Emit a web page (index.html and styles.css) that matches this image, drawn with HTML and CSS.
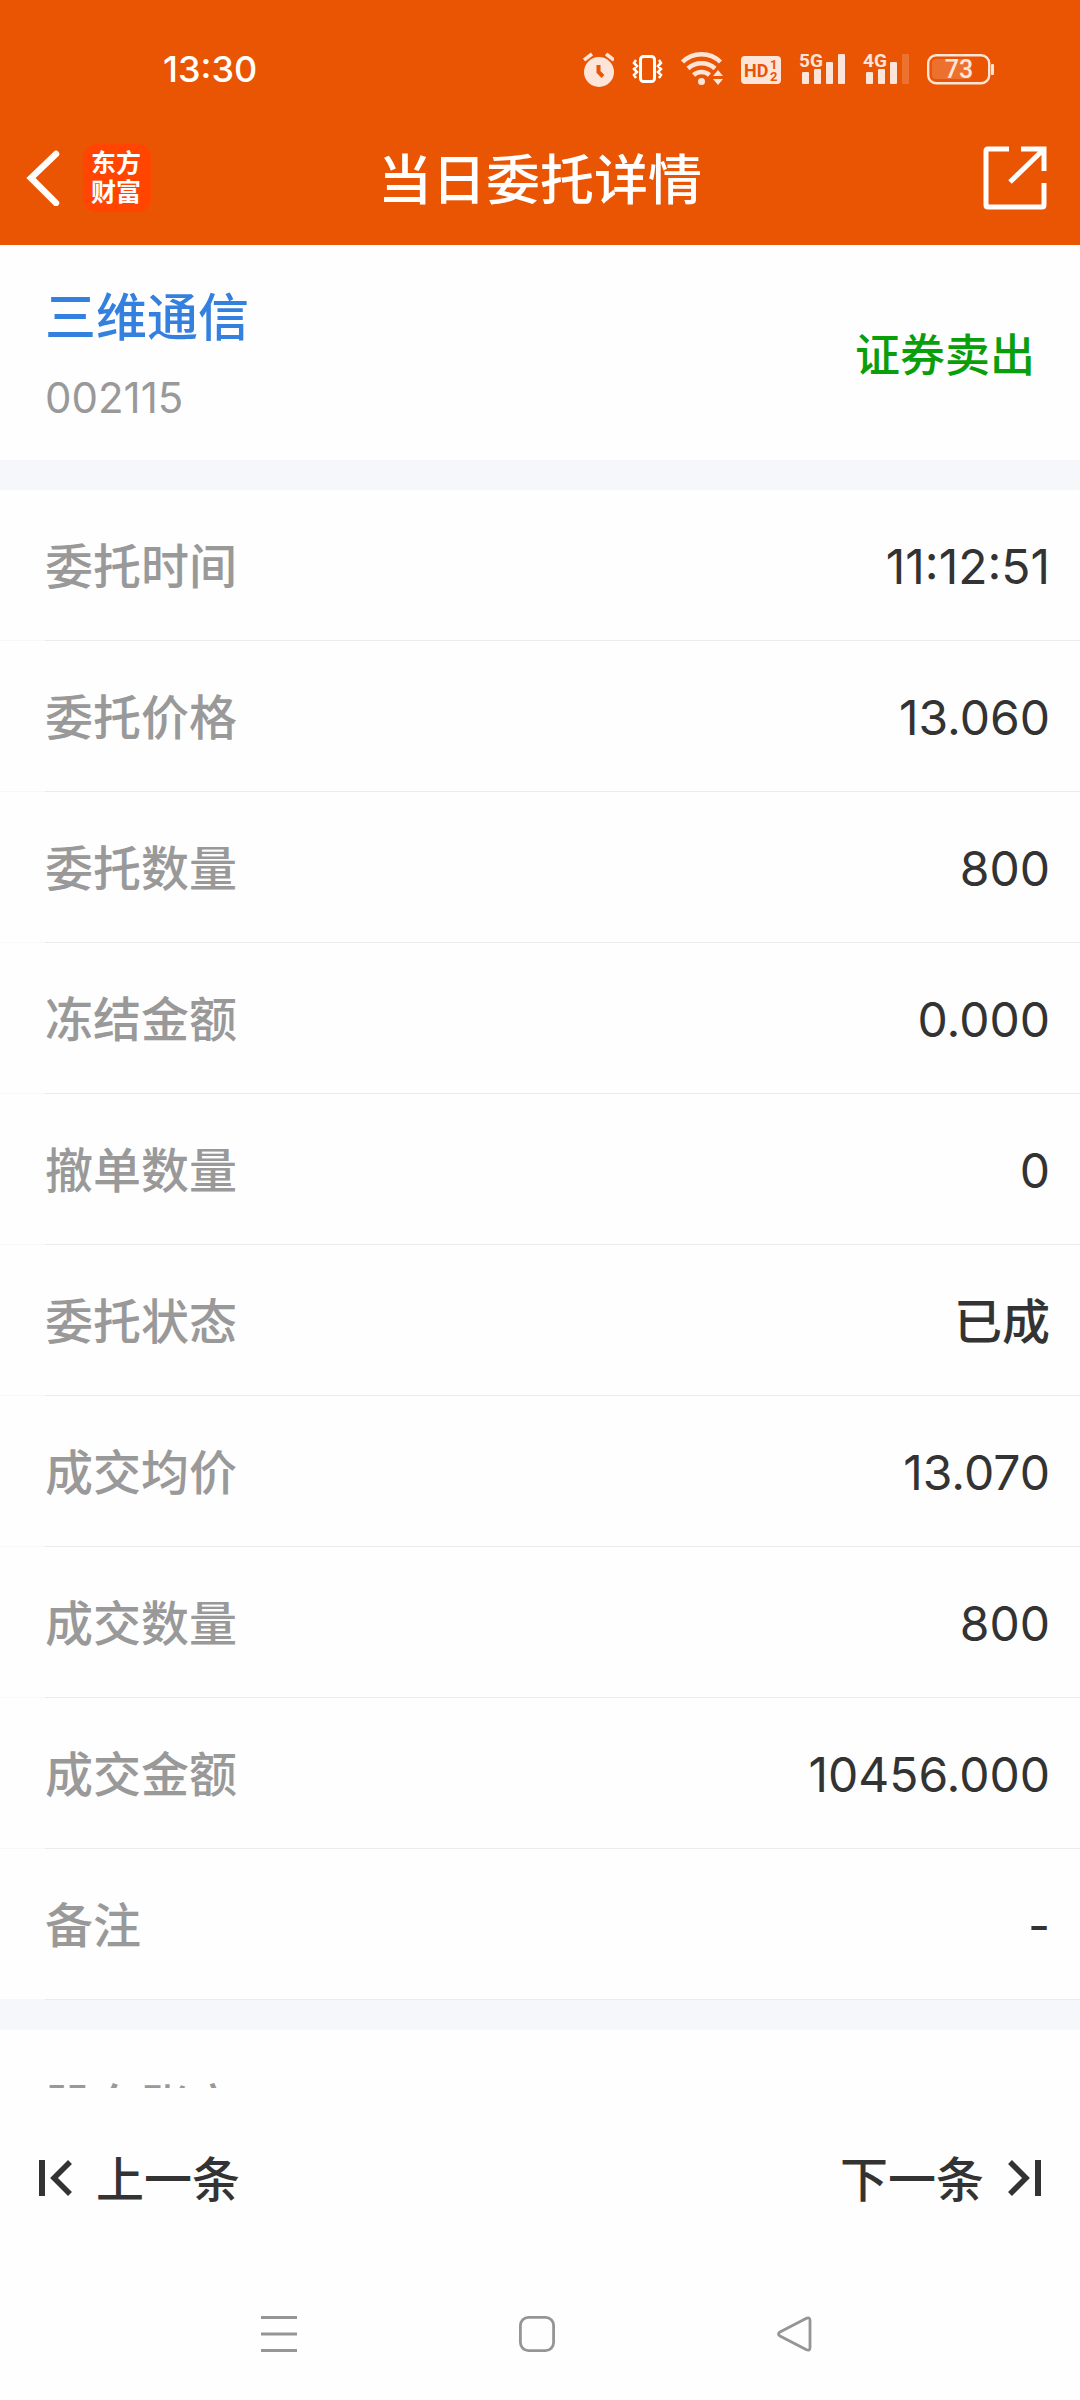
FILE: index.html
```html
<!DOCTYPE html>
<html lang="zh-CN">
<head>
  <meta charset="UTF-8">
  <meta name="viewport" content="width=device-width, initial-scale=1.0">
  <title>当日委托详情</title>
  <link rel="stylesheet" href="styles.css">
</head>
<body>
  <header class="header">
    <!-- 状态栏 -->
    <div class="status-bar">
      <span class="time">13:30</span>
      <div class="status-icons">
        <svg width="32" height="38" viewBox="0 0 32 38">
          <circle cx="17" cy="22" r="15" fill="#fde5da"/>
          <path d="M2 10L10 4M24 4l8 6" stroke="#fde5da" stroke-width="3.500" fill="none"/>
          <path d="M16.500 15v7l4.500 4.500" stroke="#ea5504" stroke-width="4" fill="none"/>
        </svg>
        <svg width="31" height="38" viewBox="0 0 31 38" fill="none" stroke="#fff">
          <rect x="8.500" y="6.500" width="14" height="25" rx="3" stroke-width="3"/>
          <path d="M4 10l-2 3 3 3-3 3 3 3-3 3 2 3M27 10l2 3-3 3 3 3-3 3 3 3-2 3" stroke-width="2.500"/>
        </svg>
        <svg width="42" height="38" viewBox="0 0 42 38">
          <g fill="none" stroke="#fde5da" stroke-width="4.500">
            <path d="M1.500 12A27 27 0 0 1 39.500 12"/>
            <path d="M7 18.500A20 20 0 0 1 34 18.500"/>
            <path d="M12.500 25A12 12 0 0 1 28.500 25"/>
          </g>
          <circle cx="20.500" cy="31.500" r="3.500" fill="#fde5da"/>
          <path d="M32 26l5-6 5 6zM32 29l5 6 5-6z" fill="#fde5da"/>
        </svg>
        <svg width="40" height="38" viewBox="0 0 40 38">
          <rect x="0" y="6" width="40" height="28" rx="4" fill="#fde5da"/>
          <g class="hd-text">
            <text x="3" y="27" font-size="18">HD</text>
            <text x="29" y="19" font-size="13">1</text>
            <text x="29" y="31" font-size="13">2</text>
          </g>
        </svg>
        <svg width="46" height="38" viewBox="0 0 46 38" fill="#fde5da">
          <text class="net" x="0" y="17">5G</text>
          <rect x="3" y="22" width="7" height="12" rx="1"/>
          <rect x="15" y="19" width="7" height="15" rx="1"/>
          <rect x="27" y="12" width="7" height="22" rx="1"/>
          <rect x="39" y="4" width="7" height="30" rx="1"/>
        </svg>
        <svg width="46" height="38" viewBox="0 0 46 38" fill="#fde5da">
          <text class="net" x="0" y="17">4G</text>
          <rect x="3" y="22" width="7" height="12" rx="1"/>
          <rect x="15" y="19" width="7" height="15" rx="1"/>
          <rect x="27" y="12" width="7" height="22" rx="1"/>
          <rect x="39" y="4" width="7" height="30" rx="1" opacity=".2"/>
        </svg>
        <svg width="67" height="38" viewBox="0 0 67 38">
          <rect x="1.200" y="5.200" width="61" height="28" rx="8" fill="none" stroke="#fde5da" stroke-width="2.400"/>
          <rect x="5" y="9" width="39" height="20" rx="4" fill="#fff" opacity=".17"/>
          <rect x="64" y="14" width="3" height="11" rx="1" fill="#fde5da"/>
          <text class="battery" x="32" y="28">73</text>
        </svg>
      </div>
    </div>

    <!-- 标题栏 -->
    <div class="title-bar">
      <div class="title-left">
        <button class="icon-btn" aria-label="返回">
          <svg width="34" height="56" viewBox="0 0 34 56"><path d="M30 4L5 28l25 25" fill="none" stroke="#fff" stroke-width="6.500" stroke-linecap="round"/></svg>
        </button>
        <span class="logo">东方<br>财富</span>
      </div>
      <h1>当日委托详情</h1>
      <button class="icon-btn share" aria-label="分享">
        <svg width="64" height="64" viewBox="0 0 64 64" fill="none" stroke="#fff" stroke-width="5">
          <path d="M26 3H5q-2 0-2 2v54q0 2 2 2h54q2 0 2-2V37"/>
          <path d="M38 3h23v22M60 4L27 36"/>
        </svg>
      </button>
    </div>
  </header>

  <main class="content">
    <section class="stock">
      <div class="stock-info">
        <a class="stock-name" href="#">三维通信</a>
        <div class="stock-code">002115</div>
      </div>
      <span class="side">证券卖出</span>
    </section>

    <!-- 委托信息 -->
    <dl class="details">
      <div class="row"><dt>委托时间</dt><dd>11:12:51</dd></div>
      <div class="row"><dt>委托价格</dt><dd>13.060</dd></div>
      <div class="row"><dt>委托数量</dt><dd>800</dd></div>
      <div class="row"><dt>冻结金额</dt><dd>0.000</dd></div>
      <div class="row"><dt>撤单数量</dt><dd>0</dd></div>
      <div class="row"><dt>委托状态</dt><dd class="state">已成</dd></div>
      <div class="row"><dt>成交均价</dt><dd>13.070</dd></div>
      <div class="row"><dt>成交数量</dt><dd>800</dd></div>
      <div class="row"><dt>成交金额</dt><dd>10456.000</dd></div>
      <div class="row"><dt>备注</dt><dd>-</dd></div>
    </dl>

    <!-- 账户信息 -->
    <dl class="details">
      <div class="row"><dt>股东账户</dt><dd></dd></div>
    </dl>
  </main>

  <footer class="pager">
    <button class="pager-btn">
      <svg width="33" height="36" viewBox="0 0 33 36" fill="none" stroke="#333"><path d="M3 0v36" stroke-width="6"/><path d="M31 2L15 18l16 16" stroke-width="5.500"/></svg>
      <span>上一条</span>
    </button>
    <button class="pager-btn">
      <span>下一条</span>
      <svg width="33" height="36" viewBox="0 0 33 36" fill="none" stroke="#333"><path d="M30 0v36" stroke-width="6"/><path d="M2 2l16 16L2 34" stroke-width="5.500"/></svg>
    </button>
  </footer>

  <!-- 系统导航键 -->
  <nav class="system-nav">
    <button class="icon-btn" aria-label="菜单">
      <svg width="36" height="36" viewBox="0 0 36 36" stroke="#959595" stroke-width="3"><path d="M0 1.500h36M0 18h36M0 34.500h36"/></svg>
    </button>
    <button class="icon-btn" aria-label="主页">
      <svg width="36" height="36" viewBox="0 0 36 36" fill="none" stroke="#959595" stroke-width="2.800"><rect x="1.400" y="1.400" width="33.200" height="33.200" rx="8"/></svg>
    </button>
    <button class="icon-btn" aria-label="后退">
      <svg width="36" height="36" viewBox="0 0 36 36" fill="none" stroke="#959595" stroke-width="2.800"><path d="M29 2.500L3 16q-3 2 0 4l26 13.500q4 2 4-2v-27q0-4-4-2z"/></svg>
    </button>
  </nav>
</body>
</html>
```
FILE: styles.css
```css
* {
  box-sizing: border-box;
}
body {
  margin: 0;
  height: 100vh;
  display: flex;
  flex-direction: column;
  background: #fefefe;
  color: #333;
  font-family: Inter, "Noto Sans CJK SC", sans-serif;
  font-size: 48px;
  font-weight: 500;
  line-height: 1.2;
}
svg {
  display: block;
}
button {
  padding: 0;
  border: none;
  background: none;
  color: inherit;
  font: inherit;
  cursor: pointer;
}

/* 顶部 */
.header {
  background: #ea5504;
  color: #fff;
}
.status-bar {
  height: 110px;
  padding: 28px 86px 0 163px;
  display: flex;
  justify-content: space-between;
  align-items: center;
}
.time {
  padding-top: 2px;
  font-size: 36px;
}
.status-icons {
  display: flex;
  gap: 18px;
}
.hd-text {
  fill: #ea5504;
  font-family: Roboto, sans-serif;
  font-weight: 700;
}
.net {
  font-family: Roboto, sans-serif;
  font-size: 19px;
  font-weight: 700;
}
.battery {
  fill: #fde5da;
  font-family: Roboto, sans-serif;
  font-size: 25px;
  text-anchor: middle;
}
.title-bar {
  height: 135px;
  padding: 0 26px;
  display: grid;
  grid-template-columns: 1fr auto 1fr;
  align-items: center;
}
.title-left {
  display: flex;
  align-items: center;
  gap: 23px;
}
.logo {
  width: 68px;
  height: 68px;
  padding: 5px 8px;
  border-radius: 14px;
  background: #ff4500;
  font-size: 25px;
  font-weight: 700;
  line-height: 29px;
}
h1 {
  margin: 0;
  padding-top: 8px;
  font-size: 54px;
  font-weight: 500;
}
.share {
  justify-self: end;
  padding-right: 7px;
}

/* 内容 */
.content {
  flex: 1;
  min-height: 0;
  overflow: hidden;
}
.stock {
  height: 215px;
  padding: 0 45px;
  display: flex;
  justify-content: space-between;
  align-items: center;
}
.stock-info {
  padding-top: 10px;
}
.stock-name {
  display: block;
  color: #3480df;
  font-size: 51px;
  line-height: 80px;
  text-decoration: none;
}
.stock-code {
  color: #999;
  font-size: 42px;
  font-weight: 400;
  line-height: 80px;
}
.side {
  padding-top: 6px;
  color: #0a9e0a;
  font-size: 45px;
}
.details {
  margin: 0;
  border-top: 30px solid #f6f7fa;
}
.row {
  height: 151px;
  padding: 2px 30px 0 45px;
  display: flex;
  justify-content: space-between;
  align-items: center;
  background: linear-gradient(to right, #f8f8f8 45px, #ebebeb 45px) bottom / 100% 1px no-repeat;
}
dt {
  color: #999;
}
dd {
  margin: 0;
  font-weight: 400;
}
.state {
  font-weight: 500;
}

/* 底部 */
.pager {
  height: 180px;
  padding: 0 39px;
  display: flex;
  justify-content: space-between;
  align-items: center;
}
.pager-btn {
  display: flex;
  align-items: center;
  gap: 24px;
}
.pager-btn span {
  padding-top: 4px;
}
.system-nav {
  height: 132px;
  padding: 0 156px 0 150px;
  display: flex;
  justify-content: space-around;
  align-items: center;
}
```
